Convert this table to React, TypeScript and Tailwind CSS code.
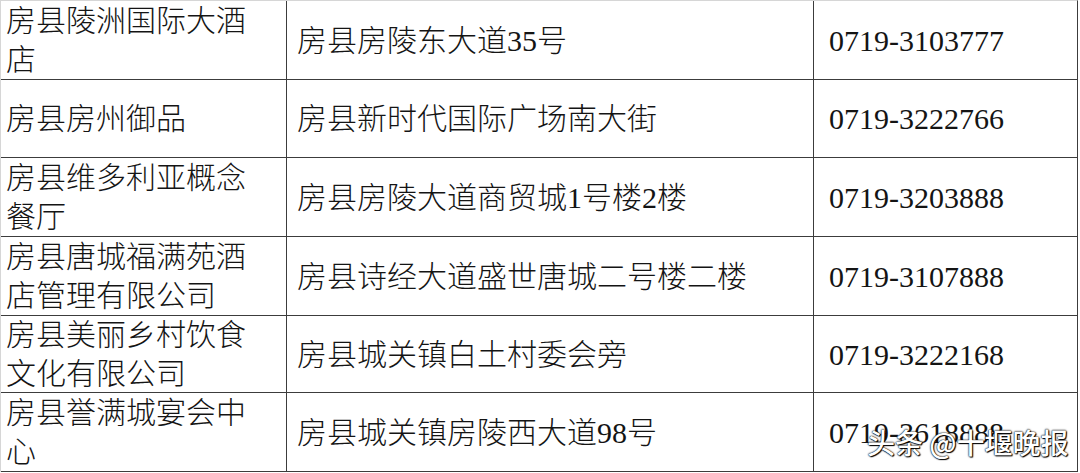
import React from "react";

type Row = { name: string[]; addr: string; tel: string; h: string };

const rows: Row[] = [
  { name: ["房县陵洲国际大酒", "店"], addr: "房县房陵东大道35号", tel: "0719-3103777", h: "h-[78px]" },
  { name: ["房县房州御品"], addr: "房县新时代国际广场南大街", tel: "0719-3222766", h: "h-[77px]" },
  { name: ["房县维多利亚概念", "餐厅"], addr: "房县房陵大道商贸城1号楼2楼", tel: "0719-3203888", h: "h-[78px]" },
  { name: ["房县唐城福满苑酒", "店管理有限公司"], addr: "房县诗经大道盛世唐城二号楼二楼", tel: "0719-3107888", h: "h-[78px]" },
  { name: ["房县美丽乡村饮食", "文化有限公司"], addr: "房县城关镇白土村委会旁", tel: "0719-3222168", h: "h-[76px]" },
  { name: ["房县誉满城宴会中", "心"], addr: "房县城关镇房陵西大道98号", tel: "0719-3618888", h: "h-[78px]" },
];

export default function App() {
  return (
    <div className="relative w-[1080px] h-[473px] overflow-hidden bg-white text-[#141414] font-[Liberation_Serif,Noto_Sans_CJK_SC,serif]">
      <div className="w-[1078px] border-t border-l border-t-[#d6d6d6] border-l-[#d6d6d6] border-r border-r-[#3c3c3c]">
        {rows.map((r, i) => (
          <div key={i} className={`flex ${r.h} box-content border-b border-[#3c3c3c]`}>
            <div className="w-[285px] shrink-0 flex flex-col justify-center pl-[5px] text-[30px] leading-[39px] font-light">
              {r.name.map((l, j) => (
                <div key={j} className="whitespace-nowrap">{l}</div>
              ))}
            </div>
            <div className="w-[527px] shrink-0 border-l border-[#3c3c3c] flex items-center pl-[10px] text-[30px] leading-[39px] font-light whitespace-nowrap">
              {r.addr}
            </div>
            <div className="flex-1 border-l border-[#3c3c3c] flex items-center pl-[15px] text-[30px] leading-[39px] whitespace-nowrap">
              {r.tel}
            </div>
          </div>
        ))}
      </div>
      <div className="absolute left-[867px] top-[425px] text-[28px] leading-[34px] font-medium text-white whitespace-nowrap font-[Noto_Sans_CJK_SC,sans-serif] [text-shadow:0_0_2px_#000,0_0_1px_#000,1px_1px_1px_#000]">
        头条 @十堰晚报
      </div>
    </div>
  );
}
